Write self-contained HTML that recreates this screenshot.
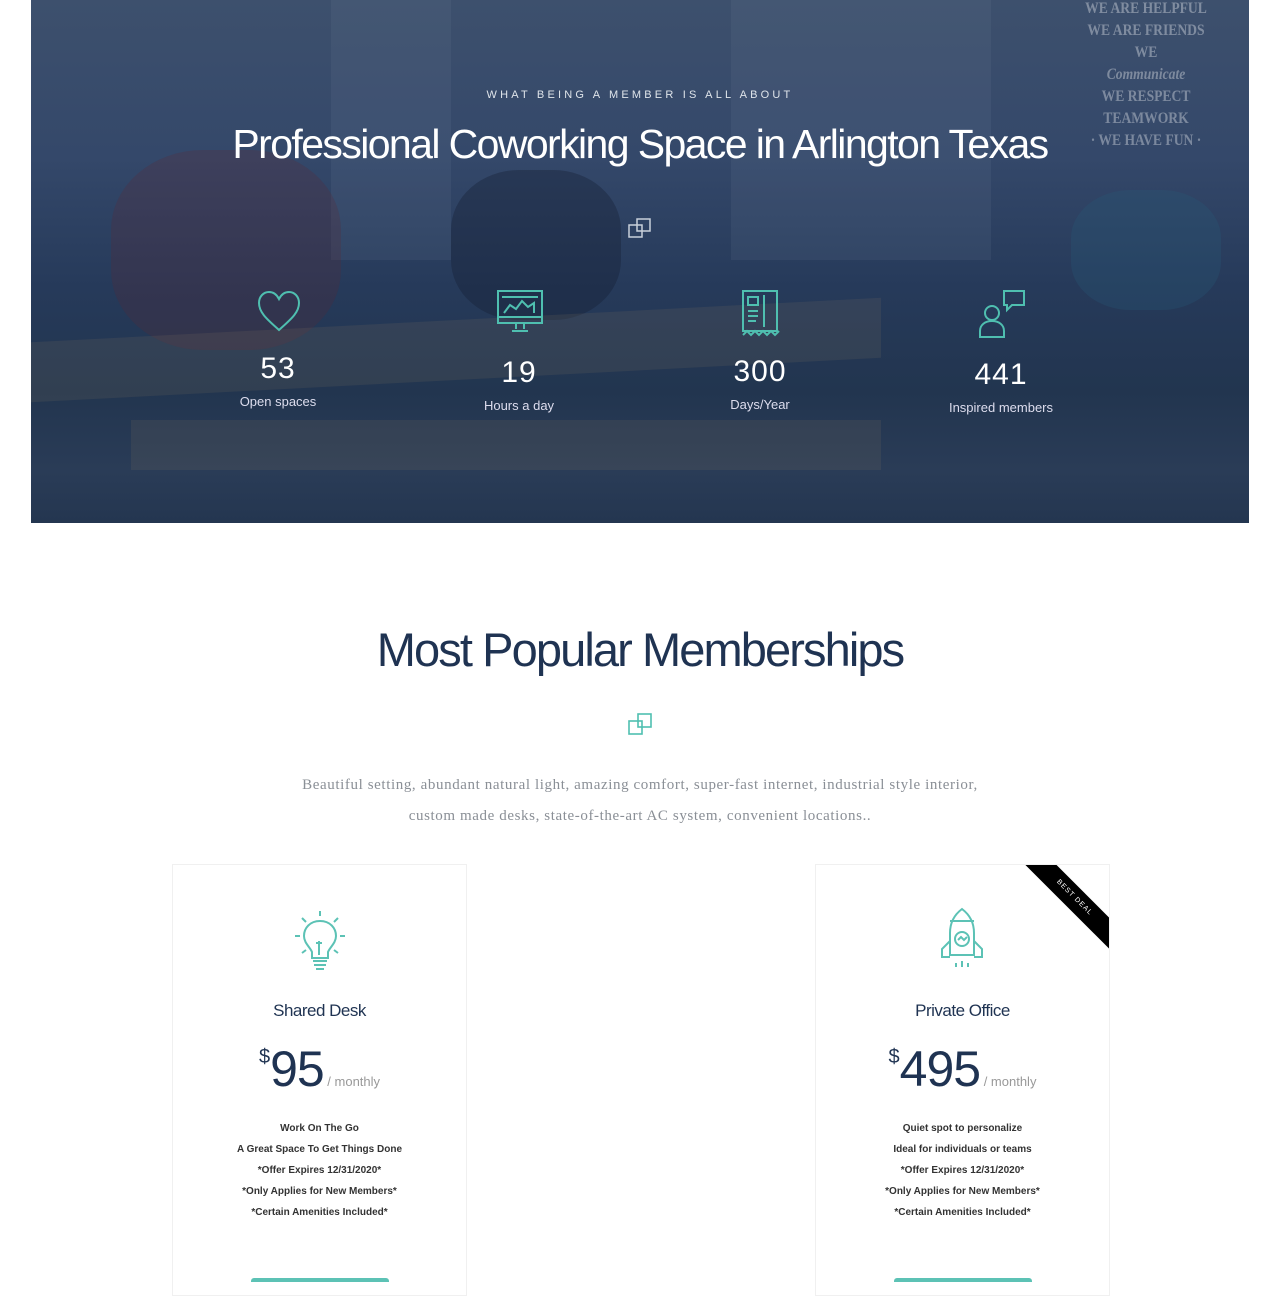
<!DOCTYPE html>
<html><head><meta charset="utf-8"><style>
body{margin:0;background:#fff;font-family:"Liberation Sans",sans-serif;width:1280px;height:1280px;overflow:hidden;position:relative}
.hero{position:absolute;left:31px;top:0;width:1218px;height:523px;background:
linear-gradient(180deg,#3d506d 0%,#34486a 30%,#263a5a 55%,#22354f 75%,#2a3c57 90%,#243650 100%);overflow:hidden}
.hero .win{position:absolute;top:0;height:260px;background:rgba(120,140,165,.12)}
.hero .blob{position:absolute;background:rgba(20,30,50,.35);border-radius:40%}
.hero .desk{position:absolute;background:rgba(120,110,95,.18)}
.abs{position:absolute;text-align:center}
.eyebrow{top:89px;left:0;width:1280px;color:#dfe4ea;font-size:11px;letter-spacing:3.2px}
h1{position:absolute;top:121px;left:0;width:1280px;margin:0;text-align:center;color:#fff;font-weight:normal;font-size:41px;letter-spacing:-1.6px}
.stat{position:absolute;width:200px;text-align:center;color:#fff}
.stat .n{font-size:30px;letter-spacing:1px}
.stat .l{font-size:13px;color:#dde;margin-top:8px}
h2{position:absolute;top:622px;left:0;width:1280px;margin:0;text-align:center;color:#1f3352;font-weight:normal;font-size:47px;letter-spacing:-1.9px}
.desc{top:770px;left:0;width:1280px;color:#8a8f96;font-size:15px;line-height:31px;font-family:"Liberation Serif",serif;letter-spacing:.6px}
.card{position:absolute;top:864px;width:293px;height:430px;border:1px solid #eee;border-color:#f0f0f0;text-align:center;overflow:hidden}
.ttl{position:absolute;top:136px;width:100%;font-size:17px;color:#1f3352;letter-spacing:-.5px}
.price{position:absolute;top:175px;width:100%;color:#1f3352}
.price .d{font-size:20px;vertical-align:top;position:relative;top:6px}
.price .big{font-size:50px;letter-spacing:-1px}
.price .m{font-size:13px;color:#999}
.feat{position:absolute;top:253px;width:100%;font-size:10px;line-height:21px;color:#333;font-weight:bold}
.btn{position:absolute;top:413px;left:78px;width:138px;height:4px;background:#5cc2b5;border-radius:3px 3px 0 0}
.ribbon{position:absolute;right:-30px;top:22px;width:130px;height:22px;background:#000;color:#fff;font-size:7px;line-height:22px;transform:rotate(45deg);letter-spacing:1px}
</style></head><body>
<div class="hero">
<div class="win" style="left:300px;width:120px"></div>
<div class="win" style="left:700px;width:260px"></div>
<div class="blob" style="left:80px;top:150px;width:230px;height:200px;background:rgba(90,40,50,.25)"></div>
<div class="blob" style="left:420px;top:170px;width:170px;height:150px"></div>
<div class="blob" style="left:1040px;top:190px;width:150px;height:120px;background:rgba(40,90,120,.3)"></div>
<div class="desk" style="left:0;top:320px;width:850px;height:60px;transform:skewY(-3deg)"></div>
<div class="desk" style="left:100px;top:420px;width:750px;height:50px"></div>
<div style="position:absolute;left:1035px;top:-2px;width:160px;color:rgba(255,255,255,.35);font-size:16px;line-height:22px;text-align:center;font-family:'Liberation Serif',serif;font-weight:bold;transform:scaleX(.85);white-space:nowrap">WE ARE HELPFUL<br>WE ARE FRIENDS<br>WE<br><i>Communicate</i><br>WE RESPECT<br>TEAMWORK<br>· WE HAVE FUN ·</div>
</div>
<div class="abs eyebrow">WHAT BEING A MEMBER IS ALL ABOUT</div>
<h1>Professional Coworking Space in Arlington Texas</h1>
<svg style="position:absolute;left:627px;top:216px" width="28" height="24" viewBox="0 0 28 24" fill="none" stroke="#c8d0da" stroke-width="1.5"><rect x="2" y="9" width="13" height="12"/><rect x="10" y="3" width="13" height="12"/></svg>

<svg style="position:absolute;left:256px;top:289px" width="46" height="44" viewBox="0 0 46 44" fill="none" stroke="#4fbfb0" stroke-width="2"><path d="M23 41C12 31 3 24 3 14 3 7 8 3 13 3c5 0 8 3 10 7 2-4 5-7 10-7 5 0 10 4 10 11 0 10-9 17-20 27z"/></svg>
<svg style="position:absolute;left:496px;top:289px" width="48" height="48" viewBox="0 0 48 48" fill="none" stroke="#4fbfb0" stroke-width="2"><rect x="2" y="2" width="44" height="32"/><path d="M2 28h44M6 8h36M8 24l6-8 6 4 6-8 6 6 6-4v10M20 34v6M28 34v6M16 42h16"/></svg>
<svg style="position:absolute;left:740px;top:289px" width="40" height="48" viewBox="0 0 40 48" fill="none" stroke="#4fbfb0" stroke-width="2"><rect x="3" y="2" width="34" height="40"/><path d="M8 8h10v8H8zM8 22h10M8 27h10M8 32h8M24 6v32M3 46l4-4 4 4 4-4 4 4 4-4 4 4 4-4 4 4 4-4"/></svg>
<svg style="position:absolute;left:978px;top:289px" width="48" height="50" viewBox="0 0 48 50" fill="none" stroke="#4fbfb0" stroke-width="2"><circle cx="14" cy="24" r="7"/><path d="M2 48v-6c0-6 5-10 12-10s12 4 12 10v6zM26 2h20v14h-12l-5 5v-5h-3z"/></svg>
<div class="stat" style="left:178px;top:352px"><div class="n">53</div><div class="l">Open spaces</div></div>
<div class="stat" style="left:419px;top:356px"><div class="n">19</div><div class="l">Hours a day</div></div>
<div class="stat" style="left:660px;top:355px"><div class="n">300</div><div class="l">Days/Year</div></div>
<div class="stat" style="left:901px;top:358px"><div class="n">441</div><div class="l">Inspired members</div></div>

<h2>Most Popular Memberships</h2>
<svg style="position:absolute;left:627px;top:711px" width="28" height="26" viewBox="0 0 28 26" fill="none" stroke="#4fbfb0" stroke-width="1.6"><rect x="2" y="10" width="13" height="13"/><rect x="11" y="3" width="13" height="13"/></svg>
<div class="abs desc">Beautiful setting, abundant natural light, amazing comfort, super-fast internet, industrial style interior,<br>custom made desks, state-of-the-art AC system, convenient locations..</div>

<div class="card" style="left:172px">
<svg style="position:absolute;left:120px;top:44px" width="54" height="64" viewBox="0 0 54 64" fill="none" stroke="#5cc2b5" stroke-width="2"><path d="M27 12c-10 0-16 7-16 15 0 7 6 11 8 16v6h16v-6c2-5 8-9 8-16 0-8-6-15-16-15zM20 52h14M21 56h12M23 60h8M27 2v5M9 9l4 4M45 9l-4 4M2 27h5M47 27h5M9 44l4-3M45 44l-4-3M26 46V32M23 34h6"/></svg>
<div class="ttl">Shared Desk</div>
<div class="price"><span class="d">$</span><span class="big">95</span><span class="m"> / monthly</span></div>
<div class="feat">Work On The Go<br>A Great Space To Get Things Done<br>*Offer Expires 12/31/2020*<br>*Only Applies for New Members*<br>*Certain Amenities Included*</div>
<div class="btn"></div>
</div>

<div class="card" style="left:815px">
<div class="ribbon">BEST DEAL</div>
<svg style="position:absolute;left:118px;top:42px" width="56" height="66" viewBox="0 0 56 66" fill="none" stroke="#5cc2b5" stroke-width="2"><path d="M28 2c-8 6-12 14-12 24v22h24V26c0-10-4-18-12-24zM16 14h24M16 34l-8 8v8h8M40 34l8 8v8h-8"/><circle cx="28" cy="32" r="7"/><path d="M24 33l3-3 3 3 3-3M22 56v4M28 54v6M34 56v4"/></svg>
<div class="ttl">Private Office</div>
<div class="price"><span class="d">$</span><span class="big">495</span><span class="m"> / monthly</span></div>
<div class="feat">Quiet spot to personalize<br>Ideal for individuals or teams<br>*Offer Expires 12/31/2020*<br>*Only Applies for New Members*<br>*Certain Amenities Included*</div>
<div class="btn"></div>
</div>
</body></html>
